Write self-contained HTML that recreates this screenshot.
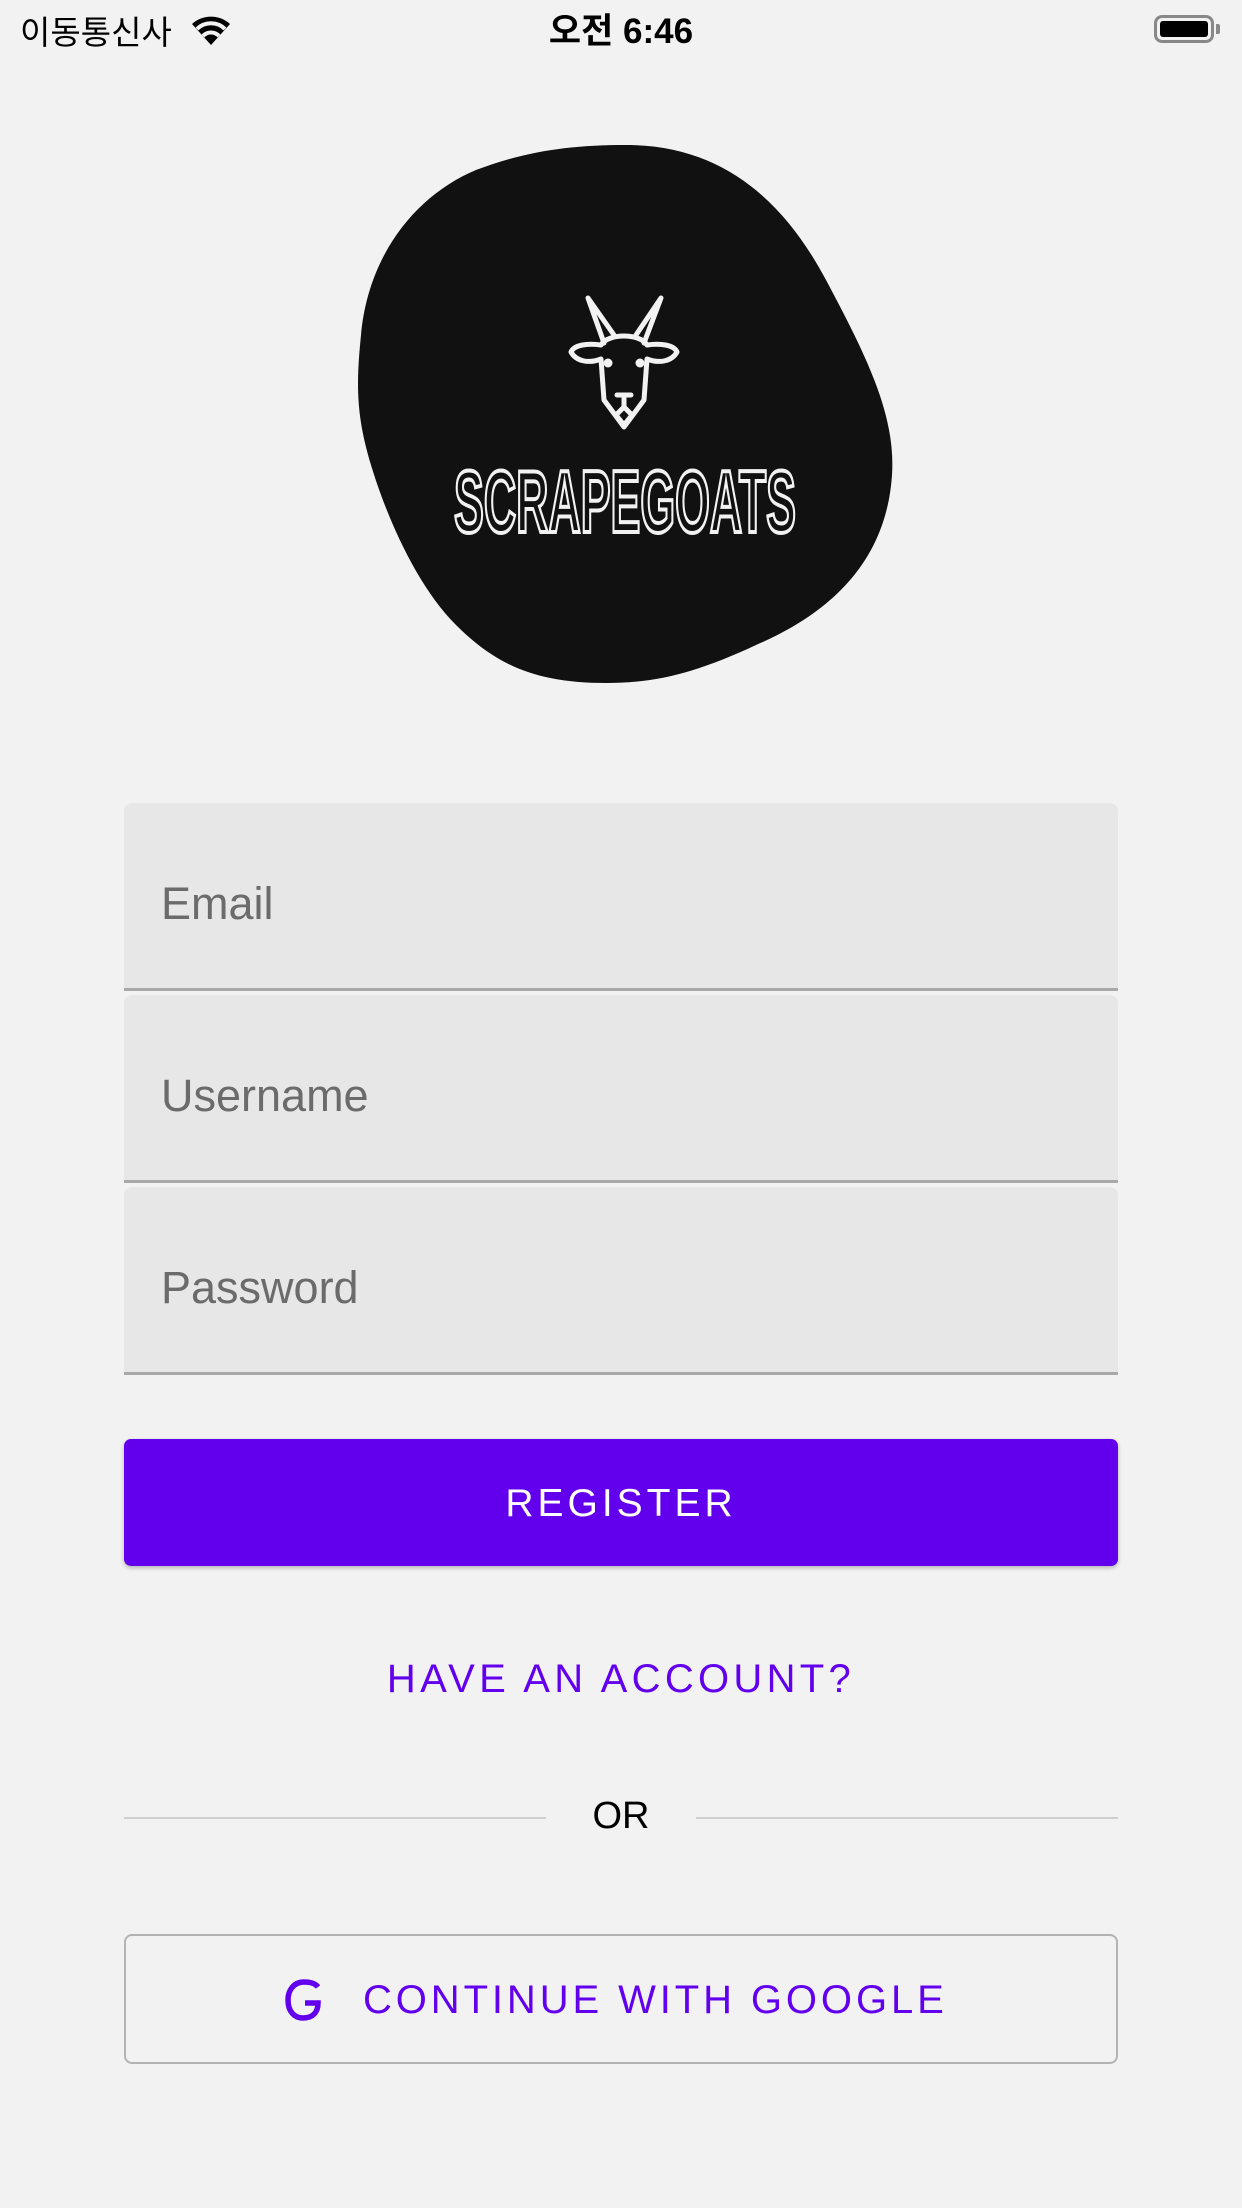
<!DOCTYPE html>
<html><head><meta charset="utf-8"><style>
body{margin:0;width:1242px;height:2208px;background:#f2f2f2;font-family:"Liberation Sans","Noto Sans CJK KR",sans-serif;position:relative;overflow:hidden}
.abs{position:absolute}
.field{position:absolute;left:124px;width:994px;background:#e7e7e7;border-bottom:3px solid #a9a9a9;border-radius:8px 8px 0 0;box-sizing:border-box}
.field span{position:absolute;left:37px;top:50%;transform:translateY(-35%);font-size:45px;color:#6b6b6b}
</style></head><body>
<div class="abs" style="left:20px;top:6px;font-size:33px;color:#000">이동통신사</div>
<svg class="abs" style="left:188px;top:12px" width="46" height="34" viewBox="0 0 46 34"><path d="M23 33 L4 12 A28 28 0 0 1 42 12 Z" fill="#000"/><path d="M9 17 A20 20 0 0 1 37 17" stroke="#f2f2f2" stroke-width="4" fill="none"/><path d="M15 24 A11 11 0 0 1 31 24" stroke="#f2f2f2" stroke-width="4" fill="none"/></svg>
<div class="abs" style="left:0;width:1242px;top:3px;text-align:center;font-size:35px;font-weight:bold;color:#000">오전 6:46</div>
<div class="abs" style="left:1154px;top:15px;width:60px;height:28px;border:3px solid #888;border-radius:8px;box-sizing:border-box"><div style="margin:3px;height:16px;background:#000;border-radius:3px"></div></div>
<div class="abs" style="left:1216px;top:24px;width:4px;height:10px;background:#888;border-radius:0 2px 2px 0"></div>

<svg class="abs" style="left:356px;top:145px" width="538" height="538" viewBox="0 0 538 538">
<path d="M270 0 C370 0 430 60 470 135 C510 210 540 270 536 330 C530 420 470 470 400 500 C340 528 300 538 250 538 C180 538 140 520 100 480 C60 440 30 370 15 320 C0 270 0 240 5 190 C12 110 60 50 120 25 C170 6 215 0 270 0 Z" fill="#111"/>
<g stroke="#f2f2f2" stroke-width="5" fill="none" stroke-linejoin="round" stroke-linecap="round">
<path d="M248 198 L232 153 L258 190 M288 198 L305 153 L280 190"/>
<path d="M245 200 C252 188 284 188 291 200 C305 198 318 200 321 207 C316 216 304 219 291 214 L288 255 L268 282 L248 255 L245 214 C232 219 220 216 215 207 C218 200 231 198 245 200"/>
<path d="M261 250 L275 250 M268 250 L268 262 L260 270 L268 280 L276 270 L268 262"/>
</g>
<circle cx="252" cy="218" r="4.5" fill="#f2f2f2"/><circle cx="284" cy="218" r="4.5" fill="#f2f2f2"/>
<text x="269" y="387" text-anchor="middle" font-family="Liberation Sans" font-weight="bold" font-size="88" fill="#111" stroke="#f2f2f2" stroke-width="4" textLength="342" lengthAdjust="spacingAndGlyphs">SCRAPEGOATS</text>
</svg>

<div class="field" style="top:803px;height:188px"><span>Email</span></div>
<div class="field" style="top:995px;height:188px"><span>Username</span></div>
<div class="field" style="top:1187px;height:188px"><span>Password</span></div>

<div class="abs" style="left:124px;top:1439px;width:994px;height:127px;background:#6200ee;border-radius:7px;box-shadow:0 2px 4px rgba(0,0,0,.25);color:#fff;font-size:39px;letter-spacing:4px;text-align:center;line-height:129px;font-weight:500">REGISTER</div>

<div class="abs" style="left:0;width:1242px;top:1657px;text-align:center;font-size:40px;letter-spacing:4.3px;color:#6200ee">HAVE AN ACCOUNT?</div>

<div class="abs" style="left:124px;top:1817px;width:422px;height:2px;background:#cfcfcf"></div>
<div class="abs" style="left:696px;top:1817px;width:422px;height:2px;background:#cfcfcf"></div>
<div class="abs" style="left:0;width:1242px;top:1795px;text-align:center;font-size:38px;color:#000">OR</div>

<div class="abs" style="left:124px;top:1934px;width:994px;height:130px;border:2px solid #b3b3b3;border-radius:8px;box-sizing:border-box"></div>
<svg class="abs" style="left:283px;top:1978px" width="42" height="44" viewBox="0 0 42 44"><path d="M35 9 C32 5 27 4 21 4 C11 4 5 12 5 22 C5 33 11 40 20 40 C30 40 35 34 35 25 L22 25" stroke="#6200ee" stroke-width="5.5" fill="none"/></svg>
<div class="abs" style="left:363px;top:1976px;font-size:40px;letter-spacing:3.9px;color:#6200ee;line-height:48px">CONTINUE WITH GOOGLE</div>
</body></html>
